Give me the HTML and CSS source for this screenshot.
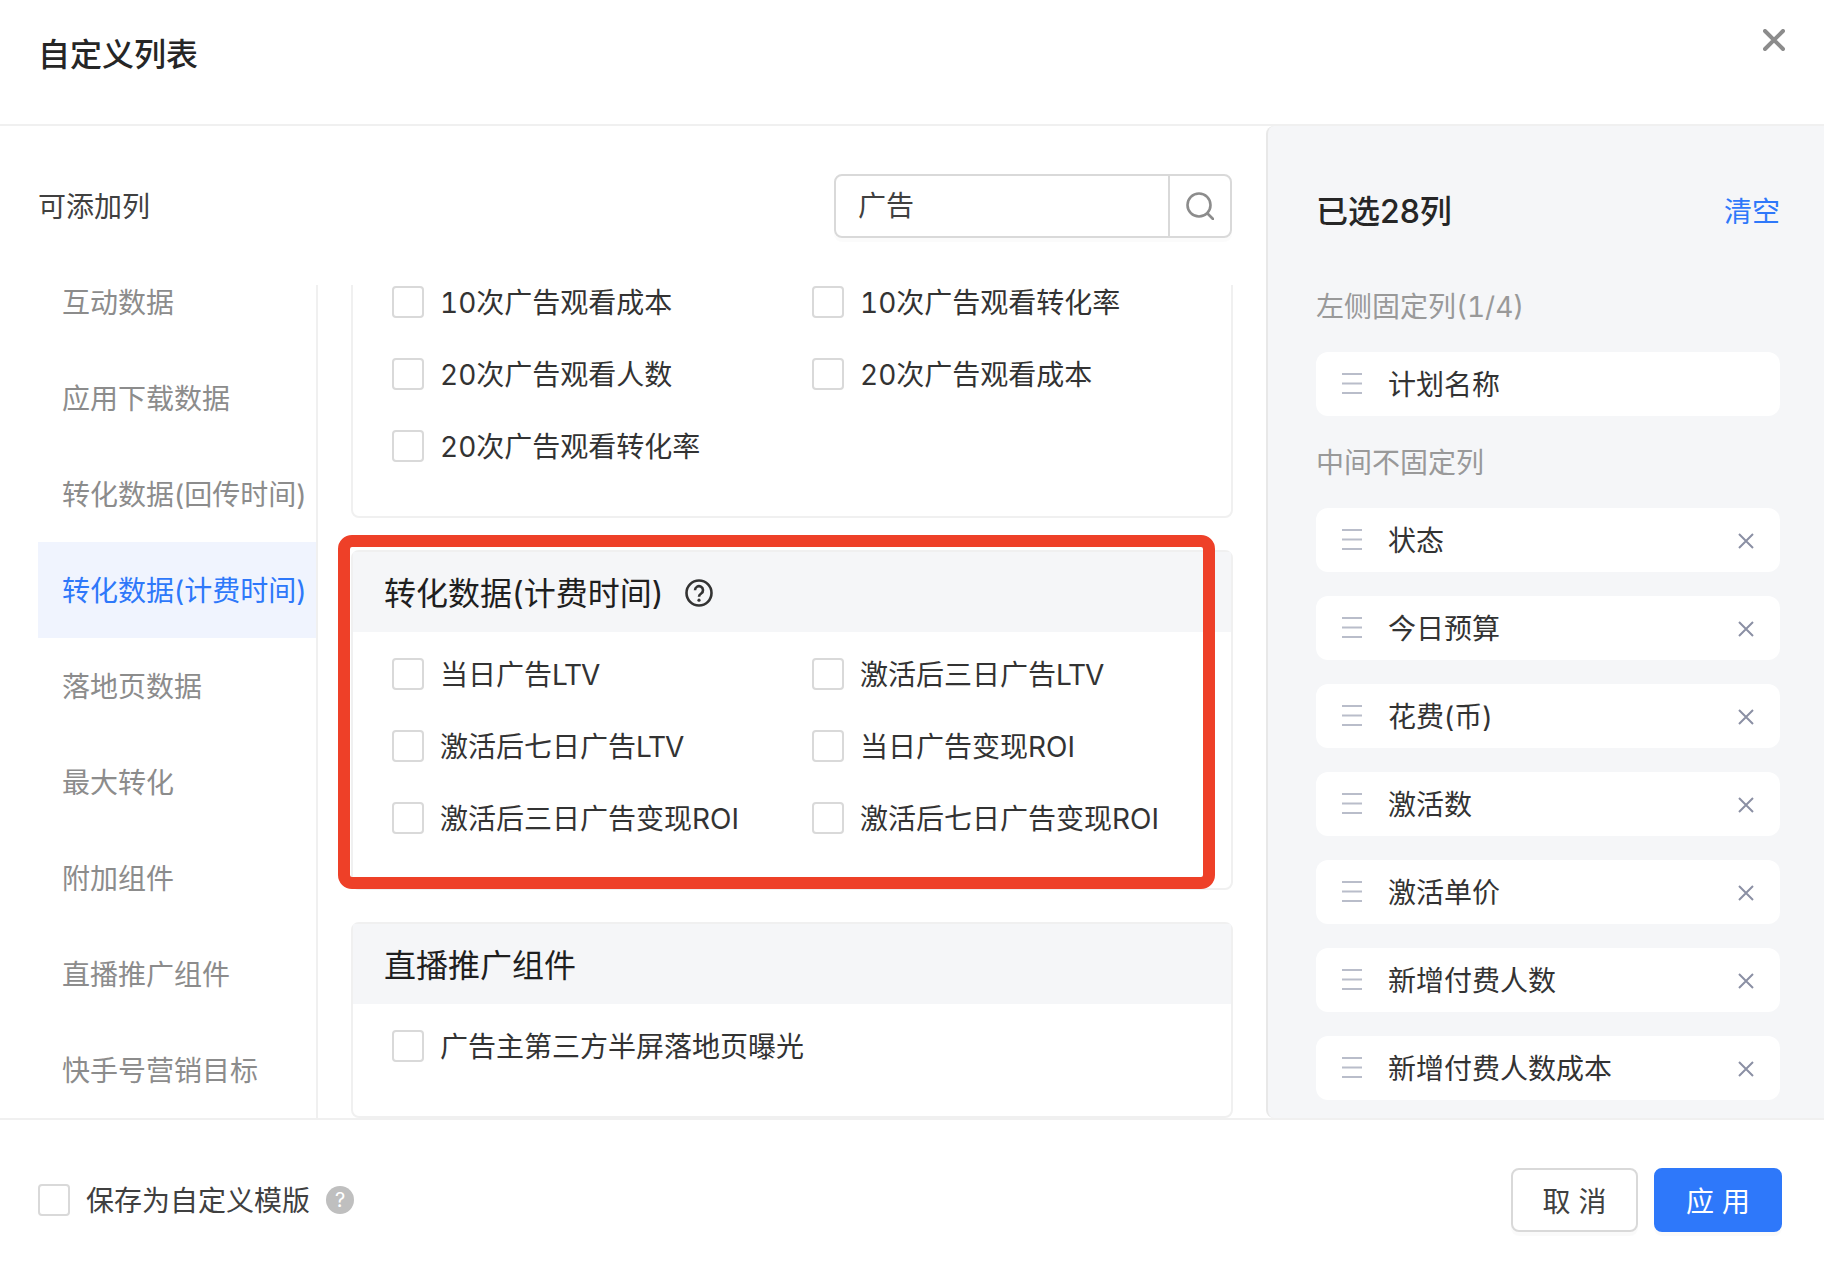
FILE: index.html
```html
<!DOCTYPE html>
<html lang="zh-CN">
<head>
<meta charset="utf-8">
<title>自定义列表</title>
<link rel="stylesheet" href="styles.css">
</head>
<body>
<svg class="defs" width="0" height="0" aria-hidden="true">
  <symbol id="i-handle" viewBox="0 0 20 22"><path d="M0 1h20M0 10.500h20M0 20h20" fill="none" stroke="#b9bdca" stroke-width="2"/></symbol>
  <symbol id="i-x" viewBox="0 0 16 16"><path d="M1 1l14 14M15 1L1 15" fill="none" stroke="#8b90a4" stroke-width="2"/></symbol>
</svg>
<div class="dialog">
  <header class="head">
    <h1 class="head-title">自定义列表</h1>
    <svg class="head-close" viewBox="0 0 22 22"><path d="M2 2l18 18M20 2L2 20" fill="none" stroke="#8c8c8c" stroke-width="4" stroke-linecap="round"/></svg>
  </header>
  <div class="main">
    <section class="left">
      <div class="toolbar">
        <span class="toolbar-label">可添加列</span>
        <div class="search">
          <span class="search-value">广告</span>
          <span class="search-btn">
            <svg class="search-icon" viewBox="0 0 28 28"><circle cx="13" cy="13" r="11.500" fill="none" stroke="#8c8c8c" stroke-width="2.600"/><path d="M21.500 21.500l5.500 5.500" fill="none" stroke="#8c8c8c" stroke-width="2.600" stroke-linecap="round"/></svg>
          </span>
        </div>
      </div>
      <div class="browser">
        <nav class="side">
          <div class="side-list">
            <div class="side-item">互动数据</div>
            <div class="side-item">应用下载数据</div>
            <div class="side-item">转化数据(回传时间)</div>
            <div class="side-item side-item-active">转化数据(计费时间)</div>
            <div class="side-item">落地页数据</div>
            <div class="side-item">最大转化</div>
            <div class="side-item">附加组件</div>
            <div class="side-item">直播推广组件</div>
            <div class="side-item">快手号营销目标</div>
          </div>
        </nav>
        <div class="groups">
          <div class="groups-list">
            <div class="card card-cut">
              <div class="card-body">
                <label class="opt"><span class="box"></span>10次广告观看成本</label>
                <label class="opt"><span class="box"></span>10次广告观看转化率</label>
                <label class="opt"><span class="box"></span>20次广告观看人数</label>
                <label class="opt"><span class="box"></span>20次广告观看成本</label>
                <label class="opt"><span class="box"></span>20次广告观看转化率</label>
              </div>
            </div>
            <div class="card">
              <div class="card-head"><span class="card-title">转化数据(计费时间)</span>
                <svg class="help" viewBox="0 0 28 28"><circle cx="14" cy="14" r="12.500" fill="none" stroke="#333" stroke-width="2.600"/><path d="M10 11.200a4 4 0 1 1 6.200 3.300c-1.400.9-2.200 1.700-2.200 3.300" fill="none" stroke="#333" stroke-width="2.600"/><circle cx="14" cy="21.200" r="1.600" fill="#333"/></svg>
              </div>
              <div class="card-body">
                <label class="opt"><span class="box"></span><span>当日广告<span class="tight">LTV</span></span></label>
                <label class="opt"><span class="box"></span><span>激活后三日广告<span class="tight">LTV</span></span></label>
                <label class="opt"><span class="box"></span><span>激活后七日广告<span class="tight">LTV</span></span></label>
                <label class="opt"><span class="box"></span>当日广告变现ROI</label>
                <label class="opt"><span class="box"></span>激活后三日广告变现ROI</label>
                <label class="opt"><span class="box"></span>激活后七日广告变现ROI</label>
              </div>
            </div>
            <div class="card">
              <div class="card-head"><span class="card-title">直播推广组件</span></div>
              <div class="card-body">
                <label class="opt opt-wide"><span class="box"></span>广告主第三方半屏落地页曝光</label>
              </div>
            </div>
          </div>
        </div>
      </div>
    </section>
    <aside class="right">
      <div class="right-head">
        <span class="right-title">已选28列</span>
        <span class="right-clear">清空</span>
      </div>
      <div class="right-label right-label-first">左侧固定列(1/4)</div>
      <div class="chosen">
        <svg class="handle"><use href="#i-handle"/></svg><span class="chosen-name">计划名称</span>
      </div>
      <div class="right-label">中间不固定列</div>
      <div class="chosen-list">
        <div class="chosen"><svg class="handle"><use href="#i-handle"/></svg><span class="chosen-name">状态</span><svg class="remove"><use href="#i-x"/></svg></div>
        <div class="chosen"><svg class="handle"><use href="#i-handle"/></svg><span class="chosen-name">今日预算</span><svg class="remove"><use href="#i-x"/></svg></div>
        <div class="chosen"><svg class="handle"><use href="#i-handle"/></svg><span class="chosen-name">花费(币)</span><svg class="remove"><use href="#i-x"/></svg></div>
        <div class="chosen"><svg class="handle"><use href="#i-handle"/></svg><span class="chosen-name">激活数</span><svg class="remove"><use href="#i-x"/></svg></div>
        <div class="chosen"><svg class="handle"><use href="#i-handle"/></svg><span class="chosen-name">激活单价</span><svg class="remove"><use href="#i-x"/></svg></div>
        <div class="chosen"><svg class="handle"><use href="#i-handle"/></svg><span class="chosen-name">新增付费人数</span><svg class="remove"><use href="#i-x"/></svg></div>
        <div class="chosen"><svg class="handle"><use href="#i-handle"/></svg><span class="chosen-name">新增付费人数成本</span><svg class="remove"><use href="#i-x"/></svg></div>
      </div>
    </aside>
  </div>
  <footer class="foot">
    <label class="foot-save"><span class="box"></span>保存为自定义模版<span class="foot-help">?</span></label>
    <div class="foot-actions">
      <button class="btn btn-cancel" type="button">取 消</button>
      <button class="btn btn-apply" type="button">应 用</button>
    </div>
  </footer>
  <div class="highlight"></div>
</div>
</body>
</html>
```
FILE: styles.css
```css
* { box-sizing: border-box; }
html, body { margin: 0; padding: 0; background: #fff; }
body {
  font-family: "Inter", "Noto Sans CJK SC", sans-serif;
  font-size: 28px;
  line-height: 40px;
  color: #333;
}
.defs { position: absolute; }
.dialog {
  position: relative;
  width: 1824px;
  height: 1264px;
  display: flex;
  flex-direction: column;
  overflow: hidden;
}
.head {
  height: 126px;
  flex: none;
  border-bottom: 2px solid #f0f0f0;
  display: flex;
  justify-content: space-between;
  padding: 29px 39px 0 38px;
}
.head-title {
  margin: 4px 0 0;
  font-size: 32px;
  line-height: 44px;
  font-weight: 500;
  color: #262626;
}
.head-close { width: 22px; height: 22px; flex: none; }
.main { flex: 1; display: flex; min-height: 0; }

.left {
  width: 1266px;
  flex: none;
  padding: 0 33px 0 38px;
  display: flex;
  flex-direction: column;
}
.toolbar {
  height: 159px;
  flex: none;
  padding: 48px 1px 47px 0;
  display: flex;
  justify-content: space-between;
  align-items: center;
}
.toolbar-label { color: #404040; padding-top: 2px; }
.search {
  width: 398px;
  height: 64px;
  border: 2px solid #d9d9d9;
  border-radius: 8px;
  display: flex;
  align-items: center;
  box-shadow: 0 4px 0 rgba(0, 0, 0, .015);
}
.search-value { flex: 1; padding-left: 22px; color: #404040; }
.search-btn {
  width: 62px;
  height: 100%;
  border-left: 2px solid #d9d9d9;
  display: flex;
  align-items: center;
  justify-content: center;
}
.search-icon { width: 28px; height: 28px; }

.browser { flex: 1; min-height: 0; display: flex; gap: 33px; }
.side {
  width: 280px;
  flex: none;
  border-right: 2px solid #f0f0f0;
  overflow: hidden;
}
.side-list { margin-top: -31px; }
.side-item {
  height: 96px;
  padding: 1px 0 0 24px;
  display: flex;
  align-items: center;
  white-space: nowrap;
  color: #8c8c8c;
}
.side-item-active { background: #f0f4fe; color: #2e78fa; }

.groups { width: 882px; flex: none; overflow: hidden; }
.groups-list { margin-top: -21px; display: flex; flex-direction: column; gap: 32px; }
.card { border: 2px solid #f0f0f0; border-radius: 8px; }
.card-head {
  height: 80px;
  padding-left: 31px;
  background: #f5f6f8;
  display: flex;
  align-items: center;
  gap: 22px;
  font-size: 32px;
  font-weight: 400;
  color: #1f1f1f;
}
.card-title { padding-top: 4px; }
.help { width: 28px; height: 28px; margin-top: 1px; }
.card-body {
  padding: 6px 0 34px 39px;
  display: grid;
  grid-template-columns: 420px 420px;
  grid-auto-rows: 72px;
}
.card-cut .card-body { padding-top: 0; }
.opt {
  display: flex;
  align-items: center;
  gap: 16px;
  white-space: nowrap;
  color: #333;
  padding-top: 2px;
  font-variant-numeric: tabular-nums;
}
.opt-wide { grid-column: span 2; }
.tight { letter-spacing: -1.100px; }
.box {
  width: 32px;
  height: 32px;
  flex: none;
  border: 2px solid #d9d9d9;
  border-radius: 4px;
  background: #fff;
  margin-bottom: 2px;
}

.right {
  flex: 1;
  min-width: 0;
  background: #f5f6f8;
  border-left: 2px solid #e8e8e8;
  border-radius: 8px 0 0 8px;
  padding: 64px 44px 0 48px;
  overflow: hidden;
}
.right-head { display: flex; justify-content: space-between; align-items: center; height: 44px; }
.right-title { font-size: 32px; font-weight: 500; color: #262626; }
.right-clear { color: #2e78fa; }
.right-label { color: #999; margin: 27px 0 25px; font-variant-numeric: tabular-nums; }
.right-label-first { margin-top: 53px; }
.chosen-list { display: flex; flex-direction: column; gap: 24px; }
.chosen {
  height: 64px;
  background: #fff;
  border-radius: 12px;
  display: flex;
  align-items: center;
  padding: 0 26px;
  color: #333;
}
.handle { width: 20px; height: 22px; flex: none; margin-right: 26px; }
.chosen-name { flex: 1; white-space: nowrap; padding-top: 2px; }
.remove { width: 16px; height: 16px; flex: none; margin-top: 2px; }

.foot {
  height: 146px;
  flex: none;
  border-top: 2px solid #f0f0f0;
  padding: 16px 42px 0 38px;
  display: flex;
  justify-content: space-between;
  align-items: center;
}
.foot-save { display: flex; align-items: center; gap: 16px; color: #404040; padding-top: 2px; }
.foot-help {
  width: 28px;
  height: 28px;
  border-radius: 50%;
  background: #bfbfbf;
  color: #fff;
  font-size: 20px;
  line-height: 28px;
  text-align: center;
  margin-bottom: 2px;
}
.foot-actions { display: flex; gap: 16px; }
.btn {
  height: 64px;
  border-radius: 8px;
  font-family: inherit;
  font-size: 28px;
  padding: 0;
  box-shadow: 0 4px 0 rgba(0, 0, 0, .02);
}
.btn-cancel { width: 127px; background: #fff; border: 2px solid #d9d9d9; color: #404040; }
.btn-apply { width: 128px; background: #2e78fa; border: 2px solid #2e78fa; color: #fff; }

.highlight {
  position: absolute;
  left: 338px;
  top: 535px;
  width: 877px;
  height: 354px;
  border: 12px solid #ee4028;
  border-radius: 14px;
  pointer-events: none;
}
```
